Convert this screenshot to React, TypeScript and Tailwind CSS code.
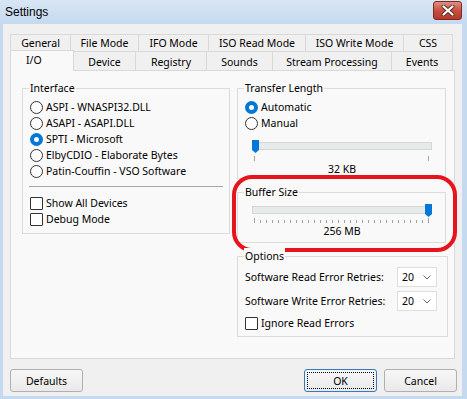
import React from "react";

type Tab = { label: string; w: string; selected?: boolean };

const topTabs: Tab[] = [
  { label: "General", w: "w-[60px]" },
  { label: "File Mode", w: "w-[68px]" },
  { label: "IFO Mode", w: "w-[70px]" },
  { label: "ISO Read Mode", w: "w-[97px]" },
  { label: "ISO Write Mode", w: "w-[98px]" },
  { label: "CSS", w: "w-[50px]" },
];

const bottomTabs: Tab[] = [
  { label: "I/O", w: "w-[64px]", selected: true },
  { label: "Device", w: "w-[61px]" },
  { label: "Registry", w: "w-[71px]" },
  { label: "Sounds", w: "w-[66px]" },
  { label: "Stream Processing", w: "w-[119px]" },
  { label: "Events", w: "w-[62px]" },
];

const interfaces = [
  "ASPI - WNASPI32.DLL",
  "ASAPI - ASAPI.DLL",
  "SPTI - Microsoft",
  "ElbyCDIO - Elaborate Bytes",
  "Patin-Couffin - VSO Software",
];

const Radio = ({ checked }: { checked?: boolean }) =>
  checked ? (
    <span className="w-[13px] h-[13px] rounded-full bg-[#0078d7] flex items-center justify-center shrink-0">
      <span className="w-[5px] h-[5px] rounded-full bg-white" />
    </span>
  ) : (
    <span className="w-[13px] h-[13px] rounded-full border border-[#333333] bg-white shrink-0" />
  );

const Check = () => (
  <span className="w-[13px] h-[13px] rounded-[1px] border border-[#333333] bg-white shrink-0" />
);

const Group: React.FC<{ title: string; className?: string; children: React.ReactNode }> = ({
  title,
  className,
  children,
}) => (
  <div className={`relative border border-[#dcdcdc] ${className}`}>
    <span className="absolute -top-[9px] left-[6px] px-px bg-[#f9f9f9] leading-[16px]">{title}</span>
    {children}
  </div>
);

const Thumb = () => (
  <svg width="7" height="13" viewBox="0 0 7 13">
    <path d="M0 0 H7 V10 L3.5 13 L0 10 Z" fill="#0078d7" />
  </svg>
);

const Slider: React.FC<{ atEnd?: boolean; ticks: number; value: string; textGap: string }> = ({
  atEnd,
  ticks,
  value,
  textGap,
}) => (
  <div className="flex flex-col ml-[7px] w-[180px]">
    <div className="relative h-[8px] bg-[#e7eaea] border border-[#d6d6d6]">
      <div className={`absolute -top-[3px] ${atEnd ? "-right-[1px]" : "-left-[1px]"}`}>
        <Thumb />
      </div>
    </div>
    <div className={`${textGap} ml-[2px] w-[175px] h-[5px] flex justify-between items-end`}>
      {Array.from({ length: ticks }).map((_, i) => (
        <span
          key={i}
          className={`w-px bg-[#a3a3a3] ${i === 0 || i === ticks - 1 ? "h-[5px]" : "h-[3px]"}`}
        />
      ))}
    </div>
    <div className="h-[16px] flex justify-center">{value}</div>
  </div>
);

const Chevron = () => (
  <svg width="8" height="5" viewBox="0 0 8 5" className="ml-auto mr-[5px]">
    <path d="M0.5 0.5 L4 4 L7.5 0.5" fill="none" stroke="#6b6b6b" strokeWidth="1" />
  </svg>
);

const Retries = ({ label }: { label: string }) => (
  <div className="flex items-center h-[20px]">
    <span className="w-[152px]">{label}</span>
    <div className="w-[40px] h-[20px] border border-[#dedede] bg-white flex items-center pl-[4px]">
      20
      <Chevron />
    </div>
  </div>
);

const Button: React.FC<{ label: string; focused?: boolean }> = ({ label, focused }) => (
  <div
    className={`relative w-[73px] h-[23px] rounded-[3px] border bg-gradient-to-b from-[#f7f7f7] to-[#e9e9e9] flex items-center justify-center ${
      focused ? "border-[#3479c4]" : "border-[#b0b0b0]"
    }`}
  >
    {focused && <span className="absolute inset-[2px] border border-dotted border-black" />}
    {label}
  </div>
);

export default function App() {
  return (
    <div className="w-[467px] h-[399px] flex flex-col bg-[#c5d9ef] font-['Noto_Sans',sans-serif] text-[10.5px] leading-[16px] text-black">
      {/* title bar */}
      <div className="h-[24px] shrink-0 flex items-start justify-between bg-gradient-to-b from-[#d9e6f5] to-[#c5d9ef]">
        <span className="pl-[5px] pt-[4px] text-[12px] font-['Liberation_Sans',sans-serif]">Settings</span>
        <div className="mt-[1px] mr-[5px] w-[29px] h-[19px] rounded-[3px] border border-[#7d2b22] bg-gradient-to-b from-[#dd8e84] via-[#c8503f] to-[#b8382a] flex items-center justify-center">
          <svg width="14" height="11" viewBox="0 0 14 11">
            <path d="M2.5 1.5 L11.5 9.5 M11.5 1.5 L2.5 9.5" stroke="#5a2a26" strokeWidth="4" strokeLinecap="round" />
            <path d="M2.5 1.5 L11.5 9.5 M11.5 1.5 L2.5 9.5" stroke="#ffffff" strokeWidth="2.2" strokeLinecap="round" />
          </svg>
        </div>
      </div>

      {/* client */}
      <div className="flex-1 ml-[3px] mr-[5px] mb-[3px] bg-[#f0f0f0] pt-[10px] px-[7px] flex flex-col">
        <div className="flex h-[17px]">
          {topTabs.map((t, i) => (
            <div
              key={t.label}
              className={`${t.w} h-full border-t border-l ${
                i === topTabs.length - 1 ? "border-r" : ""
              } border-[#d9d9d9] bg-[#f0f0f0] flex justify-center`}
            >
              {t.label}
            </div>
          ))}
        </div>
        <div className="flex h-[19px] items-end">
          {bottomTabs.map((t, i) =>
            t.selected ? (
              <div
                key={t.label}
                className={`${t.w} h-[21px] -mb-px relative z-10 border-t border-l border-r border-[#d9d9d9] bg-[#f9f9f9] pl-[15px] pt-[1px]`}
              >
                {t.label}
              </div>
            ) : (
              <div
                key={t.label}
                className={`${t.w} h-full border-t ${i === bottomTabs.length - 1 ? "border-r" : ""} ${
                  i > 1 ? "border-l" : ""
                } border-[#d9d9d9] bg-[#f0f0f0] flex justify-center pt-[2px]`}
              >
                {t.label}
              </div>
            )
          )}
        </div>

        {/* tab page */}
        <div className="h-[289px] border border-[#d9d9d9] bg-[#f9f9f9] flex items-start pl-[11px] pt-[17px] gap-[7px]">
          <Group title="Interface" className="w-[208px] h-[146px] pt-[10px] pl-[7px]">
            {interfaces.map((name, i) => (
              <div key={name} className="h-[16px] flex items-center gap-[3px]">
                <Radio checked={i === 2} />
                {name}
              </div>
            ))}
            <div className="mt-[7px] -ml-[1px] w-[194px] h-px bg-[#a8a8a8]" />
            <div className="mt-[8px] h-[16px] flex items-center gap-[3px]">
              <Check />
              Show All Devices
            </div>
            <div className="h-[16px] flex items-center gap-[3px]">
              <Check />
              Debug Mode
            </div>
          </Group>

          <div className="flex flex-col">
            <Group title="Transfer Length" className="w-[209px] h-[91px] pt-[10px] pl-[7px]">
              <div className="h-[16px] flex items-center gap-[3px]">
                <Radio checked />
                Automatic
              </div>
              <div className="h-[16px] flex items-center gap-[3px]">
                <Radio />
                Manual
              </div>
              <div className="mt-[11px]">
                <Slider ticks={2} value="32 KB" textGap="mt-[6px]" />
              </div>
            </Group>

            <div className="relative mt-[13px]">
              <Group title="Buffer Size" className="w-[209px] h-[51px] pt-[13px] pl-[7px]">
                <Slider atEnd ticks={30} value="256 MB" textGap="mt-[4px]" />
              </Group>
              <div className="absolute -left-[5px] -right-[9px] -top-[17px] -bottom-[9px] border-[4px] border-[#e8141c] rounded-[20px] pointer-events-none" />
            </div>

            <Group title="Options" className="mt-[13px] w-[211px] pt-[10px] pl-[7px] pb-[5px]">
              <Retries label="Software Read Error Retries:" />
              <div className="mt-[4px]">
                <Retries label="Software Write Error Retries:" />
              </div>
              <div className="mt-[4px] h-[16px] flex items-center gap-[3px]">
                <Check />
                Ignore Read Errors
              </div>
            </Group>
          </div>
        </div>

        {/* buttons */}
        <div className="mt-[10px] flex justify-between">
          <Button label="Defaults" />
          <div className="flex gap-[7px] -mr-[2px]">
            <Button label="OK" focused />
            <Button label="Cancel" />
          </div>
        </div>
      </div>
    </div>
  );
}
